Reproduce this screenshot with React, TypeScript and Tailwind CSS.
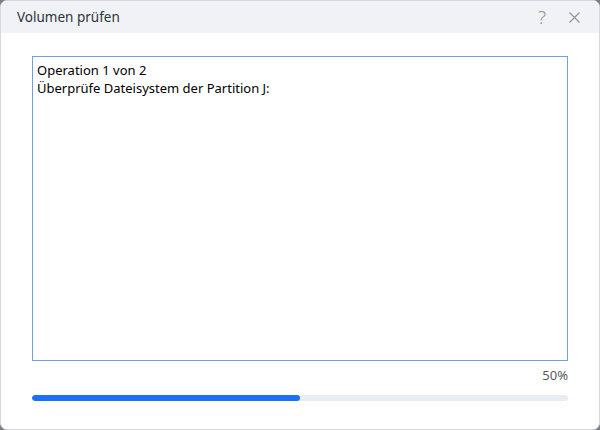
export default function App() {
  const percent = 50;
  return (
    <div className="w-[600px] h-[430px] bg-[#7a7f86]" style={{ fontFamily: '"Noto Sans", "Open Sans", sans-serif' }}>
      <div className="w-full h-full flex flex-col rounded-[7px] overflow-hidden border border-[#d5d9df] bg-white">
        <div className="h-[32px] shrink-0 flex items-center justify-between bg-[#f0f2f5] pl-4 pr-[19px]">
          <span className="text-[13.5px] text-[#2b3440]">Volumen prüfen</span>
          <div className="flex items-center gap-[23px] text-[#8d939b]">
            <span className="text-[19px] font-light leading-none">?</span>
            <svg width="11" height="11" viewBox="0 0 11 11" fill="none" stroke="currentColor" strokeWidth="1.1">
              <path d="M0.5 0.5L10.5 10.5M10.5 0.5L0.5 10.5" />
            </svg>
          </div>
        </div>
        <div className="flex-1 flex flex-col px-[31px] pt-[23px]">
          <div className="h-[305px] border border-[#6f9de6] px-[4px] pt-[4px] text-[13px] leading-[18px] text-black">
            <div>Operation 1 von 2</div>
            <div>Überprüfe Dateisystem der Partition J:</div>
          </div>
          <div className="text-right text-[13px] text-[#555b63] mt-[5px] leading-[18px]">{percent}%</div>
          <div className="mt-[11px] h-[6px] rounded-full bg-[#e9ecf0] overflow-hidden">
            <div className="h-full rounded-full bg-[#1d6ff7]" style={{ width: `${percent}%` }} />
          </div>
        </div>
      </div>
    </div>
  );
}
